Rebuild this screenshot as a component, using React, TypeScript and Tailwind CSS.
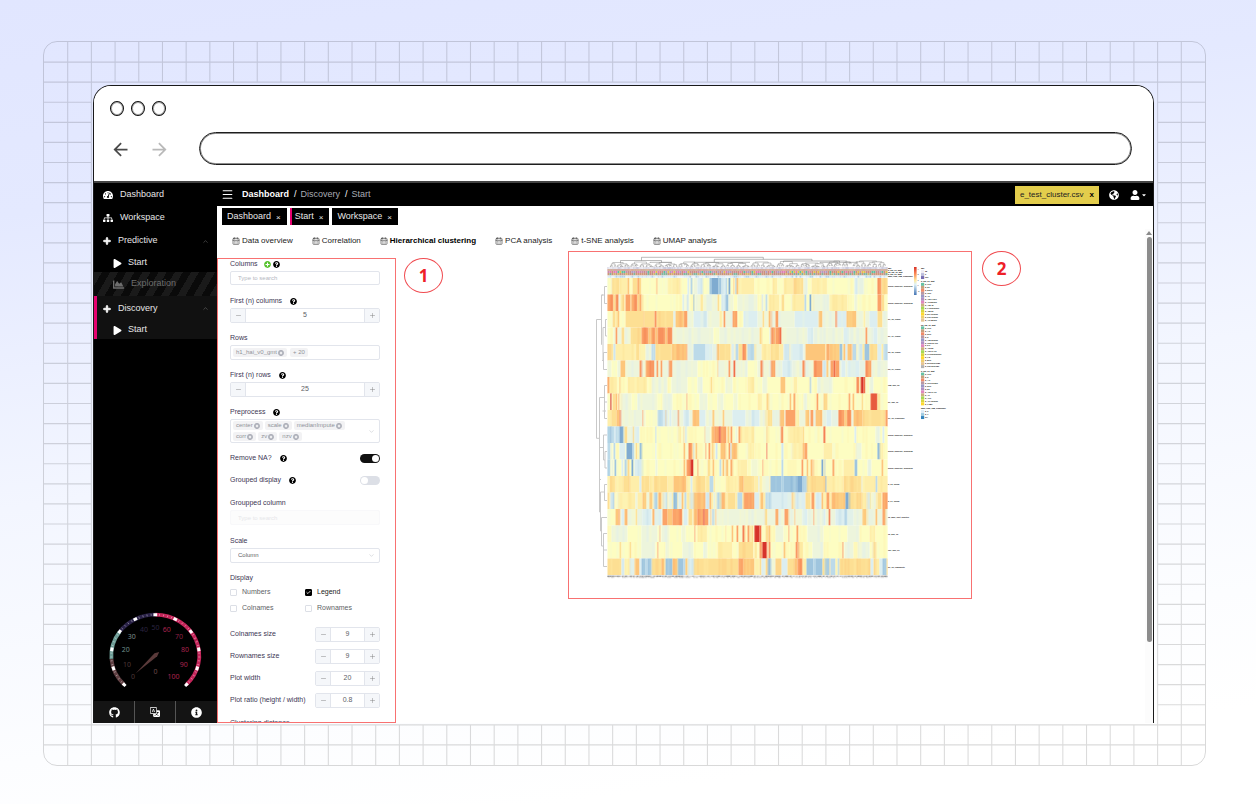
import React from "react";
import {
  FaTachometerAlt, FaSitemap, FaPlus, FaPlay, FaChartArea, FaGithub, FaInfoCircle, FaGlobeAmericas,
  FaUser, FaCaretDown, FaQuestionCircle, FaPlusCircle, FaTimesCircle,
} from "react-icons/fa";
import { BsTranslate } from "react-icons/bs";
import { MdArrowBack, MdArrowForward } from "react-icons/md";
import { CalendarDays, Check, ChevronDown, ChevronUp, Menu, Minus, Plus } from "lucide-react";

/* ---------- deterministic noise ---------- */
function makeRandom(seed: number) {
  let s = seed;
  return () => {
    s = (s * 16807) % 2147483647;
    return s / 2147483647;
  };
}

/* ---------- backdrop grid ---------- */
const COLS = 49;
const ROWS = 36;

function gridPath() {
  let d = "";
  for (let i = 1; i < COLS; i++) {
    d += i <= 2 || i >= COLS - 2 ? `M${i} 0V${ROWS}` : `M${i} 0V2M${i} ${ROWS - 2}V${ROWS}`;
  }
  for (let j = 1; j < ROWS; j++) {
    d += j <= 2 || j >= ROWS - 2 ? `M0 ${j}H${COLS}` : `M0 ${j}H2M${COLS - 2} ${j}H${COLS}`;
  }
  return d;
}

function Grid() {
  return (
    <div aria-hidden="true" className="absolute inset-0 overflow-hidden rounded-[14px] border border-black/15">
      <svg className="block h-full w-full" viewBox={`0 0 ${COLS} ${ROWS}`} preserveAspectRatio="none">
        <path d={gridPath()} fill="none" stroke="#000" strokeOpacity="0.14" strokeWidth="1.1" vectorEffect="non-scaling-stroke" />
      </svg>
    </div>
  );
}

/* ---------- browser chrome ---------- */
function BrowserBar() {
  return (
    <div className="border-b-2 border-[#444] bg-white pt-[15px] pr-[21px] pb-4 pl-4">
      <div className="flex gap-[7px]">
        {[0, 1, 2].map((i) => (
          <span key={i} className="h-[15px] w-[14px] rounded-[50%] border border-[#111] shadow-[inset_0_0_0_1px_#aaa]" />
        ))}
      </div>
      <div className="mt-4 flex items-center">
        <button aria-label="Back" className="pt-[2px] text-[#4a4a4a]"><MdArrowBack size={21} /></button>
        <button aria-label="Forward" className="ml-[18px] pt-[2px] text-[#b9b9b9]"><MdArrowForward size={21} /></button>
        <input aria-label="Address" className="ml-[29px] h-[33px] min-w-0 flex-1 rounded-full border border-[#1e1e1e] bg-white px-4 text-sm shadow-[inset_0_0_0_1px_#8c8c8c] outline-none" />
      </div>
    </div>
  );
}

/* ---------- gauge ---------- */
const CX = 155.3;
const CY = 655.7;
function onArc(value: number, rx: number, ry: number): [number, number] {
  const a = ((225 - value * 2.7) * Math.PI) / 180;
  return [CX + rx * Math.cos(a), CY - ry * Math.sin(a)];
}
function arc(from: number, to: number) {
  const [x1, y1] = onArc(from, 44, 41);
  const [x2, y2] = onArc(to, 44, 41);
  return `M${x1} ${y1}A44 41 0 0 1 ${x2} ${y2}`;
}
function tick(value: number, r: number) {
  const [x1, y1] = onArc(value, 44 - r, 41 - r);
  const [x2, y2] = onArc(value, 44 + r, 41 + r);
  return `M${x1} ${y1}L${x2} ${y2}`;
}
const GAUGE_LABELS: [string, number, number, string][] = [
  ["0", 133, 676, "#4f3838"], ["10", 127, 664, "#4f3838"], ["20", 125.7, 649.5, "#6f8f8a"], ["30", 131.7, 636, "#7f8f8c"],
  ["40", 144, 629.5, "#2c2540"], ["50", 155.5, 627, "#2c2540"], ["60", 166.8, 629.5, "#a8244f"], ["70", 179, 636, "#8e2145"],
  ["80", 185, 649.5, "#a8244f"], ["90", 183.7, 664, "#a8244f"], ["100", 173.5, 676, "#b0244f"], ["0", 155.4, 671, "#6b4a4a"],
];

function Gauge() {
  const minor = Array.from({ length: 51 }, (_, i) => i * 2).filter((v) => v % 10 !== 0);
  const major = Array.from({ length: 11 }, (_, i) => i * 10);
  return (
    <svg role="img" aria-label="Usage gauge" className="block w-full" viewBox="94 606 123 84">
      <g fill="none" strokeWidth="3.8">
        <path d={arc(0, 15)} stroke="#5f3f42" />
        <path d={arc(15, 30)} stroke="#6c9c95" />
        <path d={arc(30, 50)} stroke="#2a2247" />
        <path d={arc(50, 75)} stroke="#c4255a" />
        <path d={arc(75, 100)} stroke="#c4255a" />
      </g>
      <path d={minor.map((v) => tick(v, 1)).join("")} stroke="#fff" strokeOpacity="0.55" strokeWidth="0.7" />
      <path d={major.map((v) => tick(v, 1.5)).join("")} stroke="#fff" strokeWidth="3.8" />
      <path d="M135.5 673.5L154.5 653.2L159.2 652L157.2 656.2Z" fill="#5a3a3a" />
      <g className="font-['Noto_Sans',sans-serif] text-[7px]" textAnchor="middle">
        {GAUGE_LABELS.map(([t, x, y, c], i) => (
          <text key={i} x={x} y={y + 2.5} fill={c}>{t}</text>
        ))}
      </g>
    </svg>
  );
}

/* ---------- sidebar ---------- */
function Sidebar() {
  return (
    <nav className="flex w-[123px] shrink-0 flex-col bg-black text-[9px] text-[#e6e6e6]">
      <a href="#dashboard" className="flex h-6 items-center gap-[7px] pl-[9px]"><FaTachometerAlt size={10} className="text-white" />Dashboard</a>
      <a href="#workspace" className="flex h-[21px] items-center gap-[7px] pl-[9px]"><FaSitemap size={10} className="text-white" />Workspace</a>
      <button className="flex h-[26px] items-center gap-[7px] pr-2 pl-[9px]">
        <FaPlus size={8} className="stroke-white text-white" strokeWidth={50} />Predictive<ChevronUp size={7} strokeWidth={1.5} className="ml-auto text-[#888]" />
      </button>
      <a href="#predictive-start" className="flex h-[18px] items-center gap-[6px] pl-[19px]"><FaPlay size={9} className="text-white" />Start</a>
      <a href="#exploration" className="flex h-6 items-center gap-[7px] bg-[repeating-linear-gradient(120deg,#1a1a1a_0px,#1a1a1a_7px,#0a0a0a_7px,#0a0a0a_14px)] pl-[19px] text-[#6d6d6d]">
        <FaChartArea size={11} />Exploration
      </a>
      <div className="border-l-[3px] border-[#e6006f] bg-[#111]">
        <button className="flex h-[25px] w-full items-center gap-[7px] pr-2 pl-[6px]">
          <FaPlus size={8} className="stroke-white text-white" strokeWidth={50} />Discovery<ChevronUp size={7} strokeWidth={1.5} className="ml-auto text-[#888]" />
        </button>
        <a href="#discovery-start" className="flex h-[18px] items-center gap-[6px] pl-4"><FaPlay size={9} className="text-white" />Start</a>
      </div>
      <div className="mt-auto mb-[11px]"><Gauge /></div>
      <div className="grid h-[22px] grid-cols-3 divide-x divide-[#555] bg-[#141414] text-white">
        <a href="#source" aria-label="Source code" className="flex items-center justify-center"><FaGithub size={11} /></a>
        <a href="#language" aria-label="Language" className="flex items-center justify-center"><BsTranslate size={10} /></a>
        <a href="#about" aria-label="About" className="flex items-center justify-center"><FaInfoCircle size={11} /></a>
      </div>
    </nav>
  );
}

/* ---------- header ---------- */
function Header() {
  return (
    <header className="flex h-[23px] shrink-0 items-center bg-black pr-[6px] pl-1 text-[9px] text-[#a9abb3]">
      <button aria-label="Toggle menu" className="text-white"><Menu size={13} strokeWidth={2} /></button>
      <a href="#home" className="ml-2 font-bold text-white">Dashboard</a>
      <span className="ml-[5px] text-white">/</span>
      <a href="#discovery" className="ml-1">Discovery</a>
      <span className="ml-[5px] text-white">/</span>
      <span className="ml-1">Start</span>
      <button className="ml-auto flex h-[18px] items-center bg-[#e3cd4c] px-[5px] text-[8px] text-[#222]">
        e_test_cluster.csv<b className="ml-[6px] text-black">x</b>
      </button>
      <button aria-label="Region" className="ml-[10px] text-white"><FaGlobeAmericas size={10} /></button>
      <button aria-label="Account" className="ml-[11px] flex items-center gap-px text-white"><FaUser size={10} /><FaCaretDown size={6} /></button>
    </header>
  );
}

function OpenTabs() {
  const tabs = ["Dashboard", "Start", "Workspace"];
  return (
    <div className="flex gap-[3px] pt-[2px] pl-[5px]">
      {tabs.map((t) => (
        <button
          key={t}
          className={
            t === "Start"
              ? "flex h-[17px] items-center border-l-2 border-[#e6006f] bg-black pr-[6px] pl-[3px] text-[9px] text-[#e8e8e8]"
              : "flex h-[17px] items-center bg-black pr-[6px] pl-[5px] text-[9px] text-[#e8e8e8]"
          }
        >
          {t}<span className="ml-[5px] pt-[2px] text-[8px]">×</span>
        </button>
      ))}
    </div>
  );
}

function AnalysisTabs() {
  const tabs = ["Data overview", "Correlation", "Hierarchical clustering", "PCA analysis", "t-SNE analysis", "UMAP analysis"];
  return (
    <div role="tablist" className="flex gap-[19px] pt-[10px] pb-1 pl-[15px] text-[8px] leading-[12px] text-[#222]">
      {tabs.map((t, i) => (
        <button key={t} role="tab" aria-selected={i === 2} className={i === 2 ? "flex items-center gap-[2px] font-bold text-black" : "flex items-center gap-[2px]"}>
          <CalendarDays size={8} strokeWidth={2} className="text-[#444]" />{t}
        </button>
      ))}
    </div>
  );
}

/* ---------- form ---------- */
function Help({ wide = false }: { wide?: boolean }) {
  return <FaQuestionCircle size={7} className={wide ? "ml-2 text-black" : "ml-[2px] text-black"} />;
}

function Stepper({ id, value }: { id: string; value: string }) {
  return (
    <div className="flex h-[15px] overflow-hidden rounded-[2px] border border-[#e2e5ec] text-[7px] text-[#606266]">
      <button aria-label="Decrease" className="flex w-[15px] items-center justify-center border-r border-[#e2e5ec] bg-[#f5f7fa] text-[#777]"><Minus size={7} strokeWidth={1.5} /></button>
      <input id={id} defaultValue={value} className="w-0 min-w-0 flex-1 bg-white text-center outline-none" />
      <button aria-label="Increase" className="flex w-[15px] items-center justify-center border-l border-[#e2e5ec] bg-[#f5f7fa] text-[#777]"><Plus size={7} strokeWidth={1.5} /></button>
    </div>
  );
}

function Chip({ text, closable = true }: { text: string; closable?: boolean }) {
  return (
    <span className="flex h-[9px] items-center gap-px rounded-[2px] bg-[#f2f2f4] px-[3px] text-[6px] text-[#909399]">
      {text}
      {closable && <button aria-label={`Remove ${text}`} className="text-[#a8abb5]"><FaTimesCircle size={6} /></button>}
    </span>
  );
}

const LABEL = "flex h-[10px] items-center text-[7px] leading-[10px] text-[#3d3654]";

function Tick({ id, text, checked = false }: { id: string; text: string; checked?: boolean }) {
  return (
    <div className="flex h-4 items-center gap-[5px]">
      <span className="grid place-items-center">
        <input id={id} type="checkbox" defaultChecked={checked} className="col-start-1 row-start-1 size-[7px] appearance-none rounded-[1px] border border-[#dcdfe6] bg-white checked:border-black checked:bg-black" />
        {checked && <Check size={5} strokeWidth={4} className="pointer-events-none col-start-1 row-start-1 text-white" />}
      </span>
      <label htmlFor={id} className={checked ? "text-[7px] text-[#222]" : "text-[7px] text-[#606266]"}>{text}</label>
    </div>
  );
}

const SWITCH =
  "flex h-[9px] w-5 appearance-none items-center rounded-full bg-[#dcdfe6] px-px before:size-[7px] before:rounded-full before:bg-white checked:justify-end checked:bg-[#111]";

function SettingsForm() {
  return (
    <form className="mt-[7px] w-[179px] shrink-0 overflow-hidden border border-[#f87171] pr-[15px] pl-3" onSubmit={(e) => e.preventDefault()}>
      <label htmlFor="columns" className={LABEL}>Columns<FaPlusCircle size={7} className="ml-[6px] text-[#56c22d]" /><Help /></label>
      <input id="columns" placeholder="Type to search" className="mt-[2px] block h-[14px] w-full rounded-[2px] border border-[#e2e5ec] px-[7px] text-[6px] outline-none placeholder:text-[#b4b7bf]" />

      <label htmlFor="first-columns" className={`${LABEL} mt-[11px]`}>First (n) columns<Help wide /></label>
      <div className="mt-[2px]"><Stepper id="first-columns" value="5" /></div>

      <div className={`${LABEL} mt-[10px]`}>Rows</div>
      <div className="mt-[2px] flex h-[15px] items-center gap-[3px] rounded-[2px] border border-[#e2e5ec] px-[2px]">
        <Chip text="h1_hai_v0_gmt" /><Chip text="+ 20" closable={false} />
      </div>

      <label htmlFor="first-rows" className={`${LABEL} mt-[10px]`}>First (n) rows<Help wide /></label>
      <div className="mt-[2px]"><Stepper id="first-rows" value="25" /></div>

      <div className={`${LABEL} mt-[10px]`}>Preprocess<Help wide /></div>
      <div className="mt-[2px] flex h-6 items-center rounded-[2px] border border-[#e2e5ec] pr-1 pl-[2px]">
        <div className="flex flex-1 flex-wrap gap-x-[2px] gap-y-[2px]">
          <Chip text="center" /><Chip text="scale" /><Chip text="medianImpute" /><Chip text="corr" /><Chip text="zv" /><Chip text="nzv" />
        </div>
        <ChevronDown size={7} strokeWidth={1.5} className="text-[#b4b7bf]" />
      </div>

      <div className="mt-[4px] flex h-[22px] items-center justify-between">
        <label htmlFor="remove-na" className={LABEL}>Remove NA?<Help wide /></label>
        <input id="remove-na" type="checkbox" role="switch" defaultChecked className={SWITCH} />
      </div>
      <div className="flex h-[22px] items-center justify-between">
        <label htmlFor="grouped" className={LABEL}>Grouped display<Help wide /></label>
        <input id="grouped" type="checkbox" role="switch" className={SWITCH} />
      </div>

      <label htmlFor="grouped-column" className={`${LABEL} mt-[7px]`}>Groupped column</label>
      <input id="grouped-column" disabled placeholder="Type to search" className="mt-[2px] block h-[15px] w-full rounded-[2px] border border-[#f8f8fa] bg-[#fcfcfc] px-[7px] text-[6px] placeholder:text-[#e6e7ea]" />

      <label htmlFor="scale" className={`${LABEL} mt-[11px]`}>Scale</label>
      <div className="mt-[2px] grid items-center">
        <select id="scale" className="col-start-1 row-start-1 block h-[15px] w-full appearance-none rounded-[2px] border border-[#e2e5ec] bg-white px-[7px] text-[6px] text-[#606266] outline-none">
          <option>Column</option>
          <option>Row</option>
        </select>
        <ChevronDown size={7} strokeWidth={1.5} className="pointer-events-none col-start-1 row-start-1 mr-[5px] justify-self-end text-[#b4b7bf]" />
      </div>

      <div className={`${LABEL} mt-[10px]`}>Display</div>
      <div className="grid grid-cols-2 pt-px">
        <Tick id="numbers" text="Numbers" />
        <Tick id="legend" text="Legend" checked />
        <Tick id="colnames" text="Colnames" />
        <Tick id="rownames" text="Rownames" />
      </div>

      <div className="mt-[7px]">
        {[["Colnames size", "9"], ["Rownames size", "9"], ["Plot width", "20"], ["Plot ratio (height / width)", "0.8"]].map(([t, v]) => (
          <div key={t} className="flex h-[22px] items-center justify-between">
            <label htmlFor={t} className={`${LABEL} whitespace-nowrap`}>{t}</label>
            <div className="w-[65px]"><Stepper id={t} value={v} /></div>
          </div>
        ))}
        <div className={`${LABEL} mt-[7px]`}>Clustering distance</div>
      </div>
    </form>
  );
}

/* ---------- heat map ---------- */
const SHADES: Record<string, string> = {
  z: "#7fabd0", a: "#9fc5de", b: "#bcdae9", c: "#dceef0", d: "#edf5dc", e: "#fdfdc2", f: "#feeeaa", g: "#fddf93",
  h: "#fdc67b", i: "#fba368", j: "#f0704a", k: "#d6332b",
};
// Each row: a base shade, then spans "from-to shade" over 280 columns.
const HEAT: [string, string][] = [
  ["e", "4-12g 12-20f 20-22h 25-30g 30-32i 32-34g 49-50i 60-72f 72-73g 80-82c 83-85b 86-90d 90-95c 102-104a 104-111z 111-114a 114-118c 118-120b 121-123z 126-127h 128-129a 129-131h 131-147f 165-170f 176-186f 186-196g 196-200d 204-220f 247-250c 250-256d 270-274i 274-280g"],
  ["e", "0-6i 6-8g 8-11i 11-13d 13-17g 18-23i 23-24g 24-30i 30-32g 32-34i 75-77c 78-82d 80-81b 86-87z 88-110d 93-96f 110-112g 114-118c 118-121a 121-126d 130-150d 154-156c 158-160b 161-172f 174-177g 184-197f 197-199b 202-204z 205-222d 222-240f 247-250d 270-274i 274-277g"],
  ["d", "0-5e 5-8g 8-10f 10-12h 12-18e 18-66g 36-37h 47-49i 66-68c 68-76h 76-80i 86-100c 112-115f 116-118i 125-130i 130-136e 136-150c 155-157g 161-163h 168-171i 171-187d 187-211c 211-215h 228-229i 230-239c 239-249h 249-256d 256-258f 262-270c 270-275g"],
  ["d", "0-6e 8-10i 10-14d 14-17g 17-23d 23-34g 34-65i 41-43h 48-50h 58-60h 65-90d 106-112e 152-154g 154-162e 163-166i 166-168h 168-173i 172-174j 200-206c 236-242c 258-260i 266-270c"],
  ["f", "0-4g 6-8c 10-14f 28-32g 38-44d 44-48b 48-64g 64-79h 79-80i 80-86d 86-98b 98-105c 105-109d 109-112h 112-123g 124-127c 128-131b 131-135g 135-139i 140-147b 148-154d 154-163f 163-172g 172-175f 176-182c 183-196c 196-198d 198-206h 206-218h 219-222i 222-232h 232-235a 236-244h 238-240c 245-249b 250-255c 257-262a 262-270g 270-274c 276-280b"],
  ["d", "4-10e 13-18h 32-34i 38-47i 49-51i 53-55i 61-65i 70-80d 90-110e 110-111h 121-123i 126-128j 140-150e 153-155i 163-168i 175-185c 195-197i 206-215i 215-219c 219-221h 223-232i 226-228j 234-238c 240-252c 258-264i"],
  ["e", "0-2i 2-10f 12-13h 20-40f 44-60d 64-80d 90-95d 103-105g 118-125d 140-147f 155-160d 173-178h 186-190f 202-204b 210-225d 232-238e 249-252i 253-256k 256-258j 262-266d"],
  ["e", "3-4k 5-8g 8-10h 11-12i 13-24d 30-50d 55-65d 79-80i 92-100d 110-116d 126-130d 150-155f 159-161g 182-184h 186-188i 196-199d 209-211i 216-220g 241-243i 245-247h 254-256g 263-270j 270-273f"],
  ["d", "0-4f 4-9g 9-12h 12-13i 13-26d 35-36i 38-50e 50-56b 56-60c 58-59h 62-64c 70-72i 76-82c 85-92h 92-98c 105-107h 115-117h 125-138c 144-152c 157-160f 160-165g 172-177h 178-188i 188-192f 198-202h 203-206i 208-215h 219-224c 231-244i 237-239h 246-256h 255-278g 278-280i"],
  ["e", "0-12b 3-4z 7-8c 12-16z 17-20g 20-25d 25-27g 27-32c 48-49b 70-74f 76-77h 78-79b 97-98h 98-103d 104-107h 107-112i 112-113k 113-119i 120-122h 123-125i 128-130d 131-133i 133-147f 159-160h 173-176i 180-195f 195-197g 216-218j 236-246e 247-249c 268-272d 275-277c"],
  ["e", "0-3b 3-5d 6-8b 12-18c 19-25z 25-27b 28-30g 32-34a 48-49c 76-78h 81-85i 86-87b 88-90h 98-99i 101-103i 104-106g 108-110c 109-110b 113-118h 121-123i 123-124c 124-130h 140-147f 159-160j 174-176c 184-195f 195-197h 197-200i 216-225f 248-254d 270-272a 272-276f"],
  ["e", "0-3b 4-6d 7-9a 14-16c 17-19b 20-22g 24-26z 27-34c 48-50d 76-78h 79-83i 83-86k 90-91i 100-103g 105-107h 112-114b 115-117h 118-121h 123-125i 130-140f 144-150d 155-156i 174-176b 194-196i 199-201h 203-205h 214-216z 217-218a 225-227i 236-247f 247-250a 260-264d 274-276h"],
  ["f", "2-8g 16-22g 32-34c 34-42g 46-60g 66-79h 83-85c 88-98g 102-106b 108-118e 131-136h 136-147g 151-152c 155-162d 163-174a 174-176b 176-190a 190-195z 195-199b 199-218g 218-219z 220-236f 236-254g 254-255c 268-270b"],
  ["f", "0-2g 3-5c 5-7b 8-10e 28-30d 35-39h 39-42d 42-45h 46-50b 51-54h 55-60c 58-60b 61-64d 66-70a 71-75c 74-76h 77-79b 82-85c 86-98h 98-102c 102-104h 106-108c 109-112b 114-118h 120-128g 130-135b 136-147i 147-152c 153-156h 158-163b 163-184c 184-186h 187-198c 198-203g 204-207i 208-216c 214-216h 219-222i 224-238h 238-241z 241-254g 259-262c 264-268d 270-274g 275-280i"],
  ["d", "0-8e 8-13h 11-12i 14-17c 17-20h 28-30g 35-44c 45-47h 47-54c 55-60i 60-65h 65-75i 76-80c 81-85g 86-90h 90-98i 96-97j 98-101i 103-104h 105-106b 108-109h 112-150d 157-160g 168-171i 177-181i 187-188h 195-200c 206-207i 214-218c 221-223j 228-246c 237-240b 255-259h 268-270h 275-278i"],
  ["e", "4-20d 34-50d 52-53i 54-62d 74-78d 87-88i 90-100f 118-119g 124-126h 129-131i 135-137j 140-142i 144-146g 147-152k 152-154j 158-161g 161-163h 168-176d 181-182i 189-191i 200-216d 226-236e 240-252d 262-268f"],
  ["e", "12-14g 22-24g 34-48d 50-51i 58-62d 75-86d 96-100d 110-125f 131-146g 147-150f 152-154i 154-155j 155-159k 159-160j 161-163i 166-176e 176-178h 188-190i 190-196f 205-216d 235-236j 237-246d 250-262d 265-268g"],
  ["g", "0-13g 14-17c 17-22f 22-27c 28-32h 32-34c 34-44a 38-40b 45-54g 54-57h 58-65a 65-70h 70-76a 76-79b 78-80h 80-86c 86-95g 95-112g 112-125g 131-136i 136-147h 147-152f 154-158c 160-163a 163-170d 168-172g 174-180c 180-184g 187-190h 190-195i 196-199f 199-215a 206-208b 217-222a 223-232b 228-230f 232-263g 263-266c 268-272f 272-275c 275-279a"],
];

const X0 = 607.5;
const Y0 = 278;
const RH = 16.5;

function heatRects() {
  const rnd = makeRandom(77);
  const out: React.ReactElement[] = [];
  const letters = "zabcdefghijk";
  HEAT.forEach(([base, spans], r) => {
    const cells: string[] = Array(280).fill(base);
    spans.split(" ").forEach((s) => {
      const m = /^(\d+)-(\d+)([a-z])$/.exec(s);
      if (m) for (let x = +m[1]; x < +m[2]; x++) cells[x] = m[3];
    });
    let c = 0;
    while (c < 280) {
      let n = 1;
      while (c + n < 280 && cells[c + n] === cells[c]) n++;
      out.push(<rect key={`${r}-${c}`} x={X0 + c} y={Y0 + r * RH} width={n + 0.1} height={RH} fill={SHADES[cells[c]]} />);
      c += n;
    }
    for (let k = 0; k < 278; k += 3) {
      const v = rnd();
      if (v < 0.5) {
        const i = letters.indexOf(cells[k]);
        const next = letters[Math.max(0, Math.min(11, v < 0.25 ? i - 1 : i + 1))];
        out.push(<rect key={`n${r}-${k}`} x={X0 + k} y={Y0 + r * RH} width={1 + Math.round(rnd() * 2)} height={RH} fill={SHADES[next]} opacity="0.35" />);
      }
    }
  });
  return out;
}

function strip(y: number, h: number, palette: string[], seed: number, step: number) {
  const rnd = makeRandom(seed);
  const out: React.ReactElement[] = [];
  for (let x = 0; x < 280; x += step) {
    const fill = palette[Math.floor(rnd() * palette.length)];
    out.push(<rect key={`${y}-${x}`} x={X0 + x} y={y} width={step} height={h} fill={fill} />);
  }
  return out;
}

function branches(x1: number, x2: number, y: number, rnd: () => number): string {
  const w = x2 - x1;
  if (w < 2.2) return "";
  const mid = x1 + w * (0.35 + rnd() * 0.3);
  const l = x1 + (mid - x1) / 2;
  const r = mid + (x2 - mid) / 2;
  const next = Math.min(266.6, y + 0.7 + rnd() * 1.6);
  return `M${l} ${next}V${y}H${r}V${next}` + branches(x1, mid, next, rnd) + branches(mid, x2, next, rnd);
}

const LEFT_TREE =
  "M601.5 319.5H596.5V438.3H599.5M603 295H601.5V344.5H602M607 286.5H604.5V303.5H607M601.5 295H604.5M603 327.5V360.5M607 319.5H605.5V336H607M603 327.5H605.5M607 352.5H603.5V369.5H607M602 360.5H603.5" +
  "M604 397.5H599.5V479.5H601M607 385.5H604.5V402H607M604.5 393V411H606M602.5 411H604.5V418.5H607" +
  "M603.5 447.5H599.5V512H600.5M607 435H603.5V460H605M607 451.5H605V468H607M604.5 492H600.5V531H601.5M607 484.5H604.5V500.5H607M607 517.5H601.5V546H603.5M607 533.5H603.5V566.5H607M603.5 550H607";

const ROW_LABELS = [
  "blood_baseline_pc000001", "blood_baseline_pc000002", "h1_v2_visual", "h1_v1_visual", "h3_v2_visual", "h3_v1_visual", "cd8_day_v2", "h1_day_v3",
  "h1_v3_responder", "blood_baseline_pc000007", "blood_baseline_pc000005", "blood_baseline_pc000003", "b_v2_visual", "b_v1_visual",
  "v3_max_visit_positive", "v3_day_v3", "cd7_day_v3", "h1_v3_composite",
];

const PALETTE = ["#66c2a5", "#c79f7c", "#f08a68", "#b898a4", "#9a97c6", "#b08fc4", "#e087bf", "#cbb07f", "#a6d854", "#d9d63c", "#ffd92f", "#efcf6d", "#e5c494", "#b3b3b3"];

const LEGENDS: { title: string; y: number; items: string[]; colors: string[] }[] = [
  { title: "age", y: 268.5, items: ["65", "0", "100"], colors: ["#efedf5", "#bcbddc", "#756bb1"] },
  { title: "h_hai_v0_gmt", y: 281.3, items: ["g_10.0", "g_20", "g_500.0", "g_15.0", "g_40", "g_402.74217", "g_40.050000", "g_405.45", "g_1.100000000", "g_452.00", "g_504.010000", "g_010.700000", "g_417.80000"], colors: PALETTE },
  { title: "h3_hai_v0_gmt", y: 324.8, items: ["g_10.0", "g_4.0", "g_20.0", "g_5", "g_405.000000", "g_118.101400", "g_5.0", "g_403.50", "g_403.17411", "g_17.0000000000", "g_7.5", "g_80.0", "g_50.000017080", "g_000.0001780"], colors: PALETTE },
  { title: "b_hai_v0_gmt", y: 371, items: ["g_10.0", "g_5", "g_4.0", "g_116.107500", "g_20.0", "g_50", "g_403.17411", "g_40", "g_40.0", "g_404.000000", "g_1.080"], colors: PALETTE },
  { title: "max_resp_cd8_responder", y: 408.5, items: ["g_0", "g_1", "NA"], colors: ["#deebf7", "#9ecae1", "#3182bd"] },
];

function HeatMap() {
  const rnd = makeRandom(41);
  let leaves = "";
  ([[609, 630, 262.5], [630, 654, 262], [654, 678, 262.5], [678, 700, 262], [700, 726, 262.5], [726, 750, 262.5], [750, 776, 262], [776, 800, 261.5], [800, 826, 263], [826, 852, 261], [852, 886, 261]] as [number, number, number][]).forEach(
    ([a, b, y]) => { leaves += branches(a, b, y, rnd); },
  );
  return (
    <svg role="img" aria-label="Hierarchical clustering heat map" className="block w-full" viewBox="569 252 402 346">
      <defs>
        <linearGradient id="scale-bar" x1="0" y1="0" x2="0" y2="1">
          <stop offset="0" stopColor="#d73027" /><stop offset="0.25" stopColor="#fc8d59" /><stop offset="0.48" stopColor="#fee9a0" />
          <stop offset="0.62" stopColor="#e0f3f8" /><stop offset="1" stopColor="#4575b4" />
        </linearGradient>
      </defs>
      <g fill="none" stroke="#8d8d8d" strokeWidth="0.5">
        <path d="M641.5 260.5V257.3H763.3V259.3M620.5 263V260.5H661.5V262.5M714.3 262V259.3H812V261M783.5 262.5V261H839.5V262.5M650 263V262.3H672M694 263V262.3H750M820 263V262.3H858" stroke="#777" />
        <path d={leaves} />
      </g>
      <path d={LEFT_TREE} fill="none" stroke="#c9c9c9" strokeWidth="1" />
      <g>
        {strip(267, 2, ["#c9c9de", "#dcdcea", "#b9b9d4", "#e6e6ee", "#cdcde0"], 5, 1)}
        {strip(269, 2, ["#c78f7f", "#d59a80", "#b9938e", "#c98c7c", "#bfa37e"], 9, 1)}
        {strip(271, 2, ["#c98fa8", "#5fbf9f", "#d08f7d", "#b09cc0", "#e2c04c", "#c78f8f", "#e07fb4"], 15, 2)}
        {strip(273, 2.4, ["#cf9679", "#bf9a8a", "#c78f7f", "#d6b26a", "#82b39d", "#c9917e"], 21, 2)}
        {strip(275.7, 2, ["#dcebf5", "#cfe3f1", "#b3d3e8", "#dcebf5", "#e8f2f9"], 33, 2)}
      </g>
      <g>{heatRects()}</g>
      {strip(575.6, 1.6, ["#777", "#aaa", "#999", "#ccc"], 55, 1)}
      {strip(577.2, 1, ["#fff", "#bbb", "#eee", "#ddd"], 59, 1)}
      <rect x="914" y="267" width="2.6" height="28" fill="url(#scale-bar)" />
      <g className="font-['Liberation_Sans',Arial,sans-serif]" fill="#111">
        <g className="text-[2px]">{["4", "2", "1", "0", "-2"].map((t, i) => <text key={i} x="917.5" y={269.5 + i * 5.5}>{t}</text>)}</g>
        <g className="text-[2px] font-bold" fill="#000">
          {["age", "h_hai_v0_gmt", "h3_hai_v0_gmt", "b_hai_v0_gmt", "max_resp_cd8_responder"].map((t, i) => <text key={i} x="888" y={269 + i * 2.1}>{t}</text>)}
        </g>
        <g className="text-[2px] font-bold">{ROW_LABELS.map((t, i) => <text key={i} x="888" y={Y0 + (i + 0.5) * RH + 0.8}>{t}</text>)}</g>
        {LEGENDS.map((l) => (
          <g key={l.title}>
            <text x="921" y={l.y + 0.8} className="text-[2px] font-bold" fill="#000">{l.title}</text>
            {l.items.map((t, i) => (
              <g key={i}>
                <rect x="921" y={l.y + 1.6 + i * 2.98} width="3.2" height="2.98" fill={l.colors[i]} />
                <text x="925" y={l.y + 3.8 + i * 2.98} className="text-[2px] font-bold">{t}</text>
              </g>
            ))}
          </g>
        ))}
      </g>
    </svg>
  );
}

function Badge({ n }: { n: number }) {
  return (
    <span className="flex h-[35px] w-[39px] shrink-0 items-center justify-center rounded-[50%] border border-[#f04b50] font-['Noto_Sans',sans-serif] text-[17px] font-bold text-[#ee2027]">
      {n}
    </span>
  );
}

export default function App() {
  return (
    <div className="flex h-screen bg-[linear-gradient(172deg,#e1e6ff_0%,#e4e9ff_22%,#f3f6ff_52%,#fcfdff_78%,#ffffff_90%)] pt-[41px] pr-[50px] pb-[38px] pl-[43px] font-['Liberation_Sans',Arial,sans-serif]">
      <div className="relative flex min-w-0 flex-1 pt-[44px] pr-[52px] pb-[43px] pl-[50px]">
        <Grid />
        <div className="relative flex min-w-0 flex-1 flex-col overflow-hidden rounded-t-[18px] border border-b-0 border-[#1a1a1a] bg-white">
          <BrowserBar />
          <div className="flex min-h-0 flex-1">
            <Sidebar />
            <div className="flex min-w-0 flex-1 flex-col bg-white">
              <Header />
              <div className="flex min-h-0 flex-1">
                <main className="flex min-w-0 flex-1 flex-col">
                  <OpenTabs />
                  <AnalysisTabs />
                  <div className="flex min-h-0 flex-1">
                    <SettingsForm />
                    <div className="mt-[7px] ml-2"><Badge n={1} /></div>
                    <div className="ml-[125px] w-[404px] shrink-0 self-start border border-[#f87171]"><HeatMap /></div>
                    <div className="ml-[10px]"><Badge n={2} /></div>
                  </div>
                </main>
                <div aria-hidden="true" className="mt-[23px] flex w-2 flex-col items-center bg-[#fcfcfc]">
                  <svg viewBox="0 0 6 4" className="my-[2px] h-1 w-[6px]"><path d="M3 0L6 4H0Z" fill="#8a8a8a" /></svg>
                  <div className="h-[82%] w-[5px] rounded-full bg-[#8c8c8c]" />
                </div>
              </div>
            </div>
          </div>
        </div>
      </div>
    </div>
  );
}
